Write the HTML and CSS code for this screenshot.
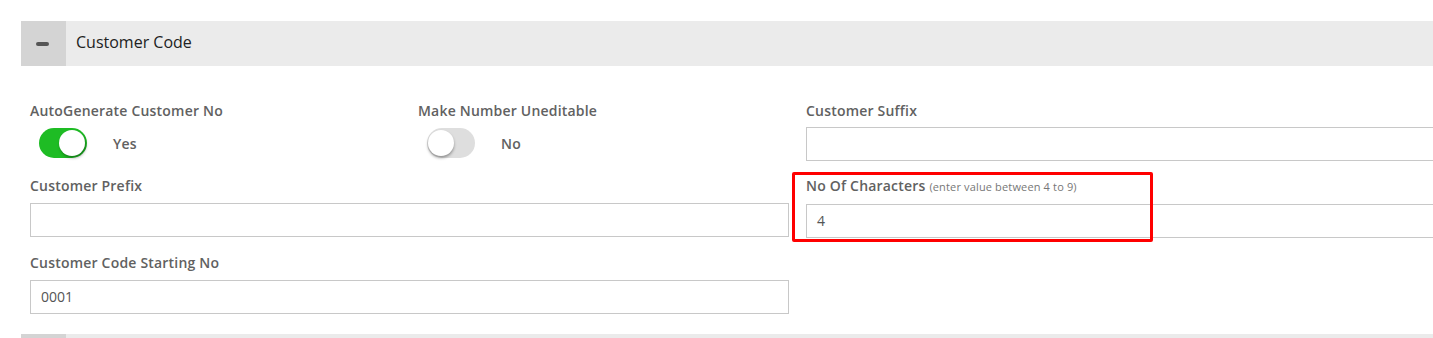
FILE: index.html
```html
<!DOCTYPE html>
<html>
<head>
<meta charset="utf-8">
<link rel="stylesheet" href="styles.css">
</head>
<body>
<div class="panel">
  <div class="panel-head">
    <div class="collapse-btn"><span class="minus"></span></div>
    <div class="panel-title">Customer Code</div>
  </div>
  <div class="panel-body">
    <div class="field">
      <div class="label first">AutoGenerate Customer No</div>
      <div class="toggle-row">
        <span class="toggle on"><span class="knob"></span></span>
        <span class="toggle-text">Yes</span>
      </div>
    </div>
    <div class="field">
      <div class="label first">Make Number Uneditable</div>
      <div class="toggle-row">
        <span class="toggle off"><span class="knob"></span></span>
        <span class="toggle-text">No</span>
      </div>
    </div>
    <div class="field span2">
      <div class="label first">Customer Suffix</div>
      <div class="input"></div>
    </div>

    <div class="field span2">
      <div class="label">Customer Prefix</div>
      <div class="input"></div>
    </div>
    <div class="field span2">
      <div class="label">No Of Characters <small class="hint">(enter value between 4 to 9)</small></div>
      <div class="input">4</div>
      <div class="red-box"></div>
    </div>

    <div class="field span2">
      <div class="label">Customer Code Starting No</div>
      <div class="input">0001</div>
    </div>
  </div>
  <div class="panel-head next">
    <div class="collapse-btn"></div>
  </div>
</div>
</body>
</html>
```

FILE: styles.css
```css
html, body {
  margin: 0;
  padding: 0;
  background: #fff;
  overflow: hidden;
  width: 1433px;
  height: 338px;
}
body {
  font-family: "Open Sans", "Liberation Sans", sans-serif;
  color: #555;
}
.panel {
  margin: 21px 0 0 21px;
  width: 1560px;
}
.panel-head {
  display: flex;
  align-items: center;
  height: 45px;
  background: #ebebeb;
}
.collapse-btn {
  width: 45px;
  height: 45px;
  background: #d4d4d4;
  display: flex;
  align-items: center;
  justify-content: center;
  flex: none;
}
.minus {
  display: block;
  width: 13px;
  height: 4px;
  border-radius: 2px;
  background: #555;
  margin-left: -2px;
}
.panel-title {
  margin-left: 10px;
  font-size: 16px;
  line-height: 20px;
  color: #222;
  padding-bottom: 3px;
}
.panel-body {
  display: grid;
  grid-template-columns: repeat(4, 371px);
  column-gap: 17px;
  row-gap: 16px;
  padding: 35px 0 20px 9px;
}
.field {
  position: relative;
  display: flex;
  flex-direction: column;
}
.span2 {
  grid-column: span 2;
}
.label {
  font-size: 14px;
  font-weight: 600;
  line-height: 18px;
  letter-spacing: 0.2px;
  color: #616161;
  margin-bottom: 8px;
  white-space: nowrap;
}
.label.first {
  padding-top: 2px;
  line-height: 16px;
}
.hint {
  font-size: 11px;
  font-weight: 400;
  letter-spacing: 0.15px;
  color: #777;
}
.input {
  height: 32px;
  border: 1px solid #c8c8c8;
  padding: 0 10px;
  font-size: 14px;
  line-height: 32px;
  color: #555;
}
.toggle-row {
  display: flex;
  align-items: center;
  margin-left: 9px;
  height: 32px;
}
.toggle {
  position: relative;
  width: 48px;
  height: 30px;
  border-radius: 15px;
  flex: none;
}
.toggle.on {
  background: #1ebc24;
}
.toggle.off {
  background: #dedede;
}
.knob {
  position: absolute;
  top: 2px;
  width: 26px;
  height: 26px;
  border-radius: 50%;
  background: #fff;
}
.toggle.on .knob {
  right: 2px;
  box-shadow: 1px 2px 3px rgba(0,0,0,0.35);
}
.toggle.off .knob {
  left: 1px;
  box-shadow: 0 2px 3px rgba(0,0,0,0.35);
}
.toggle-text {
  margin-left: 26px;
  font-size: 14px;
  font-weight: 600;
  letter-spacing: 0.2px;
  color: #616161;
}
.red-box {
  position: absolute;
  left: -14px;
  top: -5px;
  width: 355px;
  height: 64px;
  border: 3px solid #ff0000;
  border-radius: 2px;
  pointer-events: none;
}
.panel-head.next {
  height: 10px;
  overflow: hidden;
}
.panel-head.next .collapse-btn {
  height: 10px;
}
```
